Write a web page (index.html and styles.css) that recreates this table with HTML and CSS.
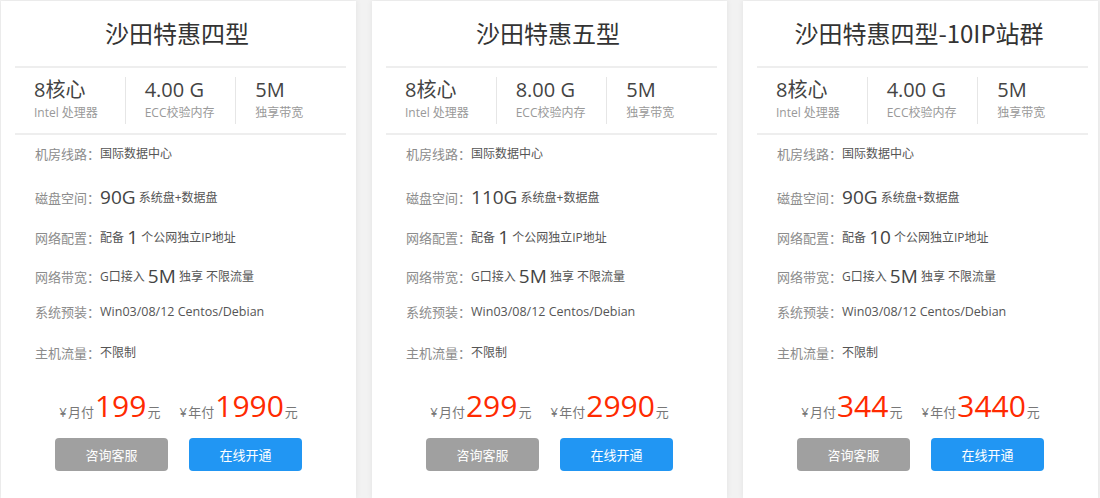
FILE: index.html
```html
<!DOCTYPE html>
<html lang="zh-CN">
<head>
<meta charset="utf-8">
<title>沙田特惠</title>
<link rel="stylesheet" href="styles.css">
</head>
<body>
<div class="plans">
  <div class="card">
    <h2 class="title">沙田特惠四型</h2>
    <div class="specs">
      <div class="spec"><div class="spec-val">8核心</div><div class="spec-sub">Intel 处理器</div></div>
      <div class="spec"><div class="spec-val">4.00 G</div><div class="spec-sub">ECC校验内存</div></div>
      <div class="spec"><div class="spec-val">5M</div><div class="spec-sub">独享带宽</div></div>
    </div>
    <ul class="details">
      <li class="row"><span class="lbl">机房线路：</span><span class="val">国际数据中心</span></li>
      <li class="row"><span class="lbl">磁盘空间：</span><span class="big">90G</span><span class="val"> 系统盘+数据盘</span></li>
      <li class="row"><span class="lbl">网络配置：</span><span class="val">配备 </span><span class="big">1</span><span class="val"> 个公网独立IP地址</span></li>
      <li class="row"><span class="lbl">网络带宽：</span><span class="val">G口接入 </span><span class="big">5M</span><span class="val"> 独享 不限流量</span></li>
      <li class="row"><span class="lbl">系统预装：</span><span class="val os">Win03/08/12 Centos/Debian</span></li>
      <li class="row"><span class="lbl">主机流量：</span><span class="val">不限制</span></li>
    </ul>
    <div class="prices">
      <span class="price"><span class="unit">¥ 月付</span><span class="num">199</span><span class="unit">元</span></span>
      <span class="price"><span class="unit">¥ 年付</span><span class="num">1990</span><span class="unit">元</span></span>
    </div>
    <div class="actions">
      <a class="btn btn-grey">咨询客服</a>
      <a class="btn btn-blue">在线开通</a>
    </div>
  </div>

  <div class="card">
    <h2 class="title">沙田特惠五型</h2>
    <div class="specs">
      <div class="spec"><div class="spec-val">8核心</div><div class="spec-sub">Intel 处理器</div></div>
      <div class="spec"><div class="spec-val">8.00 G</div><div class="spec-sub">ECC校验内存</div></div>
      <div class="spec"><div class="spec-val">5M</div><div class="spec-sub">独享带宽</div></div>
    </div>
    <ul class="details">
      <li class="row"><span class="lbl">机房线路：</span><span class="val">国际数据中心</span></li>
      <li class="row"><span class="lbl">磁盘空间：</span><span class="big">110G</span><span class="val"> 系统盘+数据盘</span></li>
      <li class="row"><span class="lbl">网络配置：</span><span class="val">配备 </span><span class="big">1</span><span class="val"> 个公网独立IP地址</span></li>
      <li class="row"><span class="lbl">网络带宽：</span><span class="val">G口接入 </span><span class="big">5M</span><span class="val"> 独享 不限流量</span></li>
      <li class="row"><span class="lbl">系统预装：</span><span class="val os">Win03/08/12 Centos/Debian</span></li>
      <li class="row"><span class="lbl">主机流量：</span><span class="val">不限制</span></li>
    </ul>
    <div class="prices">
      <span class="price"><span class="unit">¥ 月付</span><span class="num">299</span><span class="unit">元</span></span>
      <span class="price"><span class="unit">¥ 年付</span><span class="num">2990</span><span class="unit">元</span></span>
    </div>
    <div class="actions">
      <a class="btn btn-grey">咨询客服</a>
      <a class="btn btn-blue">在线开通</a>
    </div>
  </div>

  <div class="card">
    <h2 class="title">沙田特惠四型-10IP站群</h2>
    <div class="specs">
      <div class="spec"><div class="spec-val">8核心</div><div class="spec-sub">Intel 处理器</div></div>
      <div class="spec"><div class="spec-val">4.00 G</div><div class="spec-sub">ECC校验内存</div></div>
      <div class="spec"><div class="spec-val">5M</div><div class="spec-sub">独享带宽</div></div>
    </div>
    <ul class="details">
      <li class="row"><span class="lbl">机房线路：</span><span class="val">国际数据中心</span></li>
      <li class="row"><span class="lbl">磁盘空间：</span><span class="big">90G</span><span class="val"> 系统盘+数据盘</span></li>
      <li class="row"><span class="lbl">网络配置：</span><span class="val">配备 </span><span class="big">10</span><span class="val"> 个公网独立IP地址</span></li>
      <li class="row"><span class="lbl">网络带宽：</span><span class="val">G口接入 </span><span class="big">5M</span><span class="val"> 独享 不限流量</span></li>
      <li class="row"><span class="lbl">系统预装：</span><span class="val os">Win03/08/12 Centos/Debian</span></li>
      <li class="row"><span class="lbl">主机流量：</span><span class="val">不限制</span></li>
    </ul>
    <div class="prices">
      <span class="price"><span class="unit">¥ 月付</span><span class="num">344</span><span class="unit">元</span></span>
      <span class="price"><span class="unit">¥ 年付</span><span class="num">3440</span><span class="unit">元</span></span>
    </div>
    <div class="actions">
      <a class="btn btn-grey">咨询客服</a>
      <a class="btn btn-blue">在线开通</a>
    </div>
  </div>
</div>
</body>
</html>
```

FILE: styles.css
```css
* { box-sizing: border-box; }
html, body { margin: 0; padding: 0; }
body {
  background: #f2f2f2;
  font-family: "Open Sans", "Noto Sans CJK SC", sans-serif;
  color: #555;
  overflow: hidden;
}
.plans {
  display: flex;
  gap: 16px;
  padding: 1px 2px 0 1px;
}
.card {
  width: 355px;
  height: 497px;
  background: #fff;
  box-shadow: 0 0 6px rgba(0, 0, 0, 0.07);
  flex: none;
}
.title {
  margin: 0;
  height: 65px;
  line-height: 64px;
  text-align: center;
  font-weight: normal;
  font-size: 24px;
  color: #333;
  font-family: "Noto Sans CJK SC", "Open Sans", sans-serif;
  padding-right: 3px;
}
.specs {
  margin: 0 10px 0 14px;
  border-top: 2px solid #eee;
  border-bottom: 2px solid #eee;
  height: 69px;
  display: flex;
  align-items: center;
}
.spec {
  flex: 1;
  height: 47px;
  padding-left: 19px;
  border-left: 1px solid #e6e6e6;
}
.spec:first-child { border-left: none; }
.spec-val {
  font-size: 20px;
  line-height: 26px;
  color: #444;
}
.spec-sub {
  font-size: 12px;
  line-height: 20px;
  color: #999;
}
.details {
  list-style: none;
  margin: 0;
  padding: 3px 0 0 34px;
}
.row {
  height: 30px;
  display: flex;
  align-items: center;
  white-space: nowrap;
}
.row:nth-child(2) { margin-top: 14px; }
.row:nth-child(3) { margin-top: 10px; }
.row:nth-child(4) { margin-top: 9px; }
.row:nth-child(5) { margin-top: 5px; }
.row:nth-child(6) { margin-top: 11px; }
.lbl {
  font-size: 13px;
  color: #8c8c8c;
}
.val {
  font-size: 12px;
  color: #555;
  white-space: pre;
}
.val.os { font-size: 12.5px; }
.big {
  font-size: 19px;
  color: #444;
  line-height: 1;
}
.prices {
  margin-top: 21px;
  height: 36px;
  display: flex;
  justify-content: center;
  align-items: baseline;
  gap: 19px;
}
.price {
  display: flex;
  align-items: baseline;
}
.unit {
  font-size: 13px;
  color: #777;
  white-space: pre;
  word-spacing: -2px;
}
.num {
  font-size: 30px;
  line-height: 36px;
  color: #ff2a00;
  margin: 0 1px;
}
.actions {
  margin-top: 14px;
  display: flex;
  justify-content: center;
  gap: 21px;
}
.btn {
  display: block;
  width: 113px;
  height: 33px;
  line-height: 33px;
  border-radius: 4px;
  text-align: center;
  color: #fff;
  font-size: 13px;
  font-family: "Noto Sans CJK SC", sans-serif;
}
.btn-grey { background: #a0a0a0; }
.btn-blue { background: #2196f3; }
```
